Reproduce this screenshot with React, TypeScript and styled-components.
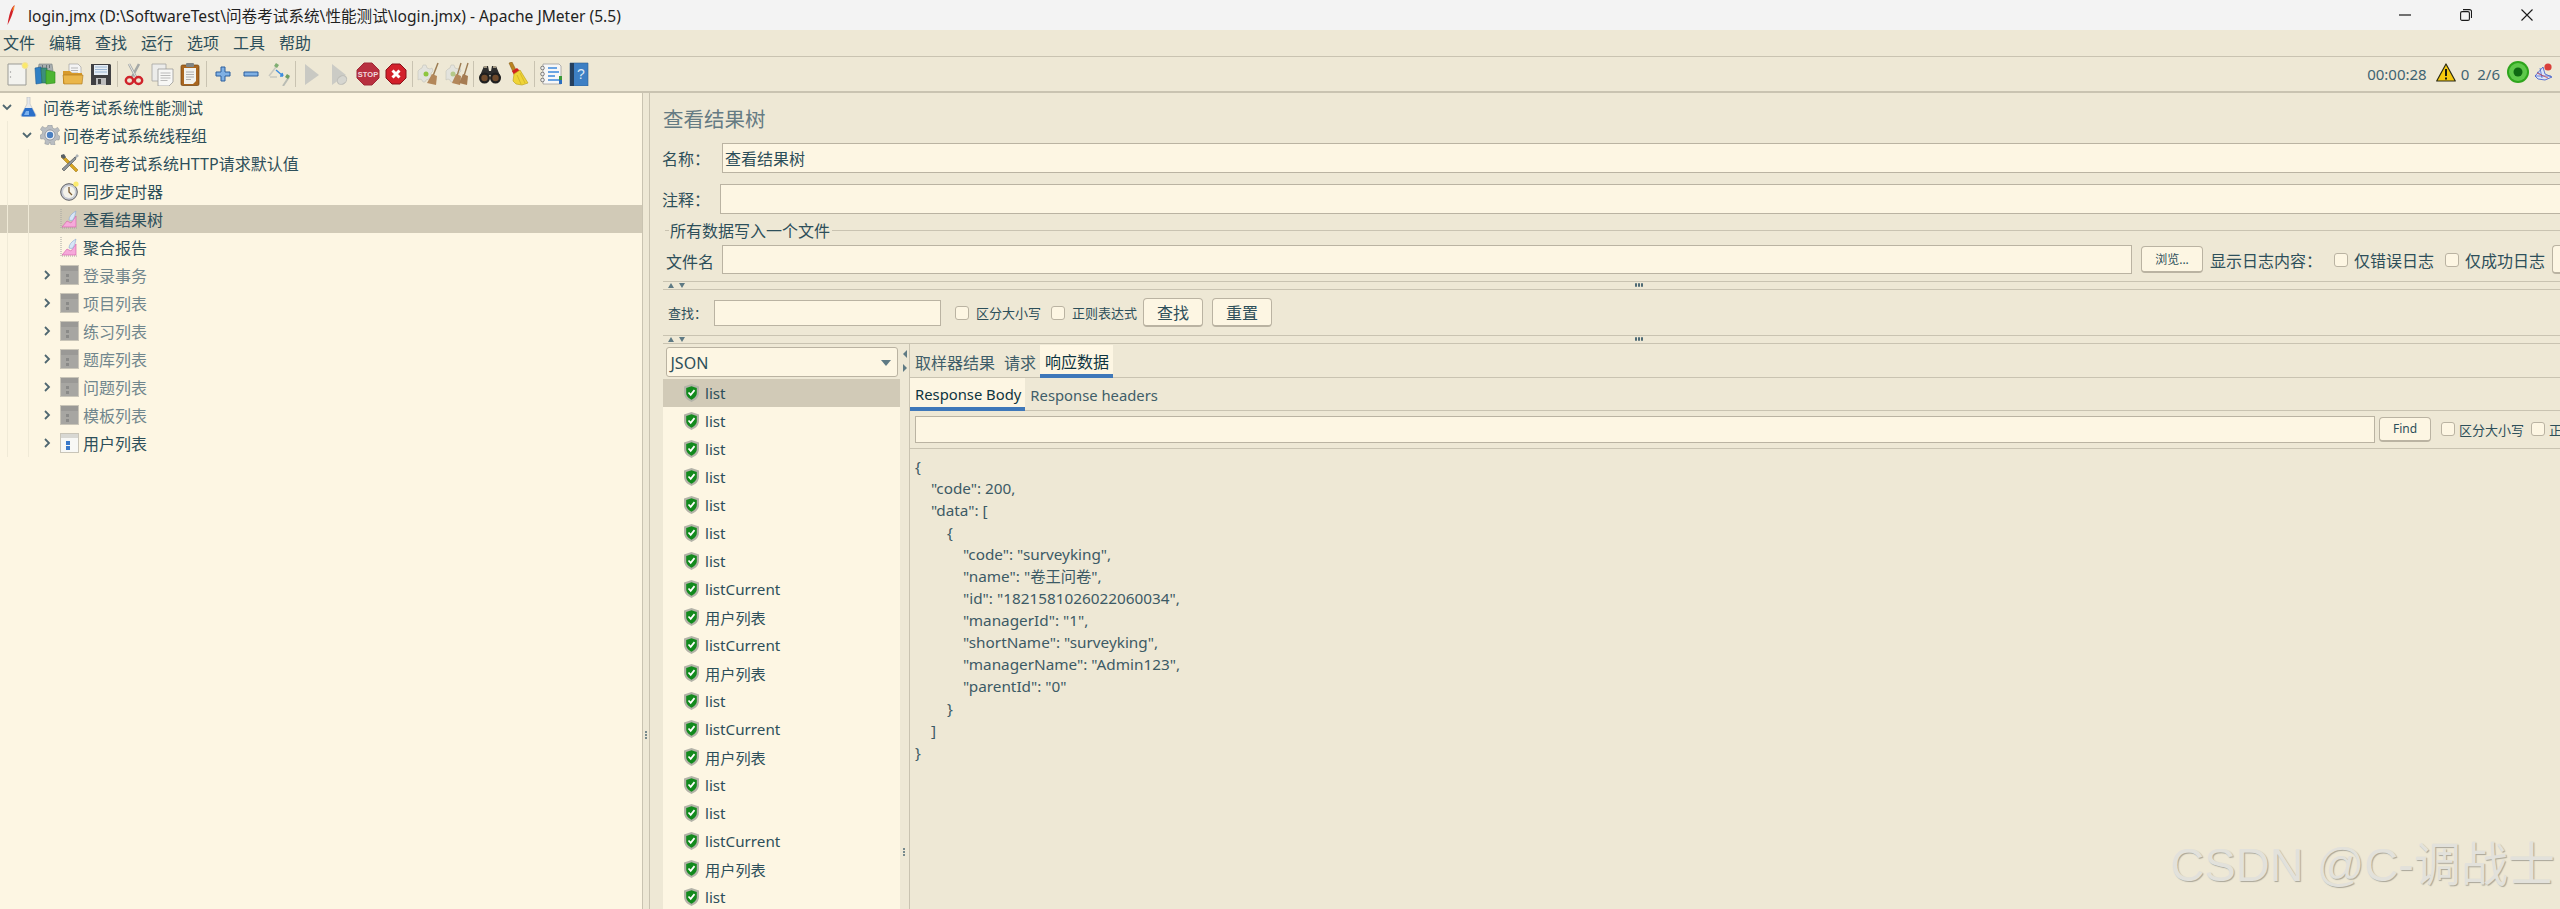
import React from 'react';
import styled, { createGlobalStyle, css } from 'styled-components';

const FONT = '"Noto Sans", "Noto Sans CJK SC", sans-serif';
const PANEL = '#eee8d5';
const PAPER = '#fdf6e3';
const LINE = '#c9c3b1';
const FIELD_LINE = '#bab3a2';
const INK = '#2d4f5a';
const SELECTED = '#d1cab7';
const BLUE = '#3f78b9';

const GlobalStyle = createGlobalStyle`
  html, body {
    margin: 0;
    padding: 0;
    overflow: hidden;
    background: ${PANEL};
  }
  body {
    font-family: ${FONT};
    font-size: 16px;
    color: ${INK};
  }
`;

/* toolbar icons, all on a 24 box */
const IconNew = () => (
  <svg width="24" height="24" viewBox="0 0 24 24">
    <path d="M3 2h18v21H3z" fill="#f3f3ef" stroke="#9b9b95" />
    <circle cx="5.500" cy="10" r=".7" fill="#999" />
    <circle cx="5.500" cy="15" r=".7" fill="#999" />
    <circle cx="20" cy="3.500" r="3" fill="#fbe96a" stroke="#f3e2a0" />
  </svg>
);
const IconTemplates = () => (
  <svg width="24" height="24" viewBox="0 0 24 24">
    <path d="M6 2l13 0 1 7H5z" fill="#a8aeb0" stroke="#78807f" strokeWidth=".6" />
    <path d="M2 6l6-1 1 16-6 1z" fill="#2f7fc4" stroke="#1c5a93" strokeWidth=".6" />
    <path d="M8 6h6v15H9z" fill="#3d8f7b" stroke="#276a58" strokeWidth=".6" />
    <path d="M13 8l9 2v11l-9 1z" fill="#4db531" stroke="#2c8a19" strokeWidth=".6" />
    <path d="M9 3h1v3H9zM13 3h1v3h-1zM16 3h1v3h-1z" fill="#6b7476" />
  </svg>
);
const IconOpen = () => (
  <svg width="24" height="24" viewBox="0 0 24 24">
    <path d="M8 2h9l3 3v9H8z" fill="#f4f4f4" stroke="#a4a4a4" strokeWidth=".7" />
    <path d="M10 6h7M10 8.500h7M10 11h7" stroke="#b5b5b5" />
    <path d="M2 9h7l2 2h10v10a1 1 0 0 1-1 1H3a1 1 0 0 1-1-1z" fill="#d79a2b" />
    <path d="M2 13h20l-1 9H3z" fill="#eab64a" stroke="#a9741a" strokeWidth=".6" />
  </svg>
);
const IconSave = () => (
  <svg width="24" height="24" viewBox="0 0 24 24">
    <path d="M2 2h19l1 1v20H2z" fill="#3f3f42" />
    <path d="M5 3h14v10H5z" fill="#e6edf4" />
    <path d="M6 5h12M6 7.500h12M6 10h12" stroke="#9cb7d4" />
    <path d="M7 16h10v7H7z" fill="#bdbdbd" />
    <path d="M9 17h3v5H9z" fill="#444" />
  </svg>
);
const IconCut = () => (
  <svg width="24" height="24" viewBox="0 0 24 24">
    <path d="M7 2l7 13M17 2l-7 13" stroke="#a4a8a6" strokeWidth="2.600" fill="none" />
    <path d="M7 2l7 13" stroke="#e4e5e3" strokeWidth="1" />
    <ellipse cx="7.500" cy="18.500" rx="3.700" ry="3.500" fill="none" stroke="#d0232b" strokeWidth="2.400" />
    <ellipse cx="16.500" cy="18.500" rx="3.700" ry="3.500" fill="none" stroke="#d0232b" strokeWidth="2.400" />
  </svg>
);
const IconCopy = () => (
  <svg width="24" height="24" viewBox="0 0 24 24">
    <path d="M2 2h14v17H2z" fill="#ececea" stroke="#a5a5a1" strokeWidth=".8" />
    <path d="M8 7h15v13l-4 4H8z" fill="#f7f7f5" stroke="#9b9b97" strokeWidth=".8" />
    <path d="M10.500 11h10M10.500 13.500h10M10.500 16h10M10.500 18.500h7" stroke="#a9a9a9" strokeWidth=".8" />
  </svg>
);
const IconPaste = () => (
  <svg width="24" height="24" viewBox="0 0 24 24">
    <rect x="3" y="3" width="18" height="20.500" rx="1.500" fill="#a9661f" stroke="#6d4010" strokeWidth=".7" />
    <path d="M6 6h12v13l-3 3H6z" fill="#f2f2ee" />
    <path d="M8 10h8M8 12.500h8M8 15h8M8 17.500h5" stroke="#9f9f9f" strokeWidth=".8" />
    <rect x="8" y="1" width="8" height="4" rx="1" fill="#7f8484" />
  </svg>
);
const IconPlus = () => (
  <svg width="24" height="24" viewBox="0 0 24 24">
    <path d="M10 5h4v5h5v4h-5v5h-4v-5H5v-4h5z" fill="#7fb0e4" stroke="#2c5f9d" strokeWidth="1" />
  </svg>
);
const IconMinus = () => (
  <svg width="24" height="24" viewBox="0 0 24 24">
    <path d="M5 10h14v4H5z" fill="#7fb0e4" stroke="#2c5f9d" strokeWidth="1" />
  </svg>
);
const IconToggle = () => (
  <svg width="24" height="24" viewBox="0 0 24 24">
    <path d="M2 14l7-9M3 15l7 0" stroke="#c8c8c0" strokeWidth="1.500" />
    <path d="M16 24l6-9" stroke="#b9bcb4" strokeWidth="2" />
    <path d="M9 1l3 2-2 3-3-2z" fill="#7fae72" />
    <path d="M20 12l3 2-2 3-3-2z" fill="#6f9f62" />
    <path d="M9 8l7 6m0 0l-1-3m1 3l-3 0" stroke="#3c8ce0" strokeWidth="1.500" fill="none" />
  </svg>
);
const IconPlay = () => (
  <svg width="24" height="24" viewBox="0 0 24 24">
    <path d="M5 2l14 11L5 23z" fill="#c9c9c3" />
  </svg>
);
const IconPlayNoPause = () => (
  <svg width="24" height="24" viewBox="0 0 24 24">
    <path d="M4 2l14 11L4 23z" fill="#cbcbc5" />
    <ellipse cx="14" cy="18" rx="5" ry="4" fill="#d6d6d0" stroke="#bdbdb7" transform="rotate(-35 14 18)" />
  </svg>
);
const StopLabel = styled.text`
  font-family: "Liberation Sans", sans-serif;
  font-size: 7.500px;
  font-weight: 700;
  fill: #f1d9dd;
`;
const IconStop = () => (
  <svg width="24" height="24" viewBox="0 0 24 24">
    <path d="M8 1h8l7 7v8l-7 7H8l-7-7V8z" fill="#b8303f" stroke="#a02a38" />
    <StopLabel x="12" y="15" textAnchor="middle">STOP</StopLabel>
  </svg>
);
const IconShutdown = () => (
  <svg width="24" height="24" viewBox="0 0 24 24">
    <path d="M8 2h8l6 6v8l-6 6H8l-6-6V8z" fill="#d3202a" stroke="#87131a" />
    <path d="M8.500 8.500l7 7M15.500 8.500l-7 7" stroke="#fff" strokeWidth="3" />
  </svg>
);
const GearBlob = () => (
  <path
    d="M3 7l2-1 1-3h3l1 3 3 1 2-1 1 3-2 2v3l2 2-2 2-2-1-3 1-1 2H6l-1-2-2-1-2 1v-9z"
    fill="#e3e3dd"
    stroke="#c2c2ba"
    strokeWidth=".6"
  />
);
const IconClear = () => (
  <svg width="24" height="24" viewBox="0 0 24 24">
    <GearBlob />
    <circle cx="9" cy="12" r="2.500" fill="#8ec63f" />
    <path d="M21 1l-5 13" stroke="#9b7b52" strokeWidth="1.500" />
    <path d="M15 12l5 2-1 9-9-2z" fill="#b3875a" />
  </svg>
);
const IconClearAll = () => (
  <svg width="24" height="24" viewBox="0 0 24 24">
    <GearBlob />
    <circle cx="8" cy="12" r="2.500" fill="#b4c98a" />
    <path d="M16 1l-4 13M23 1l-4 13" stroke="#9b7b52" strokeWidth="1.400" />
    <path d="M11 12l5 2-1 9-8-2z" fill="#b3875a" />
    <path d="M18 12l5 2-1 9-8-2z" fill="#a67c52" />
  </svg>
);
const IconSearch = () => (
  <svg width="24" height="24" viewBox="0 0 24 24">
    <path d="M6 4h4l1 5h2l1-5h4l5 12H14v-3h-4v3H1z" fill="#2c2c2c" />
    <circle cx="6.500" cy="16" r="5.500" fill="#1f1f1f" />
    <circle cx="17.500" cy="16" r="5.500" fill="#1f1f1f" />
    <circle cx="6.500" cy="16" r="3.200" fill="#6e4a2c" />
    <circle cx="17.500" cy="16" r="3.200" fill="#6e4a2c" />
    <path d="M6 5h3M15 5h3" stroke="#c4b79b" strokeWidth="1.400" />
  </svg>
);
const IconBroom = () => (
  <svg width="24" height="24" viewBox="0 0 24 24">
    <path d="M3 1l3-1 4 8-3 2z" fill="#bb8421" stroke="#7d5410" strokeWidth=".5" />
    <path d="M6 9l5-3 3 3-6 4z" fill="#d21f1f" />
    <path d="M8 12l6-4 8 13-6 2-6-1-3-3z" fill="#f0d437" stroke="#b59c1a" strokeWidth=".6" />
    <path d="M11 13l4 9M14 11l5 10" stroke="#c9ae22" strokeWidth=".7" />
  </svg>
);
const IconLog = () => (
  <svg width="24" height="24" viewBox="0 0 24 24">
    <path d="M4 2h16l2 2v18H4z" fill="#f7f7f7" stroke="#9f9f9f" strokeWidth=".8" />
    <path d="M9 6h9M9 10h11M9 14h7M9 18h11" stroke="#3d89dd" strokeWidth="1.300" />
    <circle cx="3.500" cy="6" r="1.800" fill="#eee" stroke="#555" strokeWidth=".7" />
    <circle cx="3.500" cy="12" r="1.800" fill="#eee" stroke="#555" strokeWidth=".7" />
    <circle cx="3.500" cy="18" r="1.800" fill="#eee" stroke="#555" strokeWidth=".7" />
    <rect x="20" y="14" width="3" height="4" fill="#3a9a3a" />
    <rect x="20" y="18" width="3" height="4" fill="#2c6fbf" />
  </svg>
);
const HelpMark = styled.text`
  font-family: "Liberation Sans", sans-serif;
  font-size: 14px;
  fill: #dbe9f7;
`;
const IconHelp = () => (
  <svg width="24" height="24" viewBox="0 0 24 24">
    <path d="M3 1h18v23H3z" fill="#3d7fc4" stroke="#2f5f92" strokeWidth=".6" />
    <path d="M3 1h4v23H3z" fill="#25405f" />
    <HelpMark x="14" y="17" textAnchor="middle">?</HelpMark>
  </svg>
);

/* tree icons */
const IconFlask = () => (
  <svg width="18" height="20" viewBox="0 0 18 20">
    <path d="M7 0h3v7l6 11q0 2-2 2H3q-2 0-2-2l6-11z" fill="#e6e8ea" stroke="#b5b9bd" strokeWidth=".6" />
    <path d="M5 11h7l3.500 7q0 1.500-1.500 1.500H3q-1.500 0-1.500-1.500z" fill="#2a6fc9" />
    <path d="M6 14h3v4H4z" fill="#7db2ee" />
  </svg>
);
const IconGear = () => (
  <svg width="20" height="20" viewBox="0 0 20 20">
    <path
      d="M8 0h4l.6 3 2.400 1 2.600-1.600 2 3-2.200 2 .4 2.600 2.200 1.400-1 3.600-2.800-.2-1.800 2 .6 3-3.600 1L10 17l-1.600 2.800-3.600-1 .6-3-1.800-2-2.800.2-1-3.600L2.200 9l.4-2.600-2.200-2 2-3L5 3l2.400-1z"
      fill="#b9bdc1"
      stroke="#8b9094"
      strokeWidth=".5"
    />
    <circle cx="10" cy="10" r="5" fill="#f2f3f5" stroke="#70767c" strokeWidth=".6" />
    <circle cx="10" cy="10" r="3.200" fill="#4a7fc0" />
  </svg>
);
const IconTools = () => (
  <svg width="20" height="20" viewBox="0 0 20 20">
    <path d="M3 2l15 15-2 2L1 4z" fill="#d9a520" stroke="#8d6b10" strokeWidth=".5" />
    <path d="M17 1l2 2-4 3-1-1z" fill="#aab0b5" />
    <path d="M15 4L2 16l2 2L16 6z" fill="#8f959a" stroke="#44494d" strokeWidth=".6" />
    <path d="M1 2l3-1 2 3-2 2-3-2z" fill="#596066" />
  </svg>
);
const IconTimer = () => (
  <svg width="20" height="20" viewBox="0 0 20 20">
    <circle cx="9" cy="11" r="8.300" fill="#c8cbd3" stroke="#5e6066" strokeWidth="1" />
    <circle cx="9" cy="11" r="6" fill="#f5f3ea" />
    <path d="M9 6v5l3 3" stroke="#7a5a30" strokeWidth="1.300" fill="none" />
    <circle cx="16" cy="3" r="2.600" fill="#fbea6c" />
  </svg>
);
const IconGraph = () => (
  <svg width="18" height="20" viewBox="0 0 18 20">
    <path d="M1 0v19h16" stroke="#a6a6a0" strokeDasharray="1 1" fill="none" />
    <path d="M2 18l5-6 4 2 5-7v11z" fill="#f6a9da" stroke="#d45aa8" strokeWidth=".6" />
    <path d="M9 11q0-5 7-9-1 6-3 9-2 1-4 0z" fill="#d8e6f8" stroke="#8aa8d0" strokeWidth=".6" />
  </svg>
);
const IconController = ({ $off }: { $off: boolean }) => (
  <svg width="19" height="20" viewBox="0 0 19 20">
    {$off ? (
      <>
        <rect x=".5" y=".5" width="18" height="19" fill="#a7a6a2" stroke="#c9c5b8" />
        <rect x="1" y="1" width="17" height="5" fill="#9a9996" />
        <path d="M6 9h3v3H6zM6 14h3v3H6z" fill="#8a8a88" />
      </>
    ) : (
      <>
        <rect x=".5" y=".5" width="18" height="19" fill="#f8f8f5" stroke="#c9c5b8" />
        <rect x="1" y="1" width="17" height="4" fill="#d8d8d3" />
        <path d="M6 8h4v4H6zM6 13h4v4H6z" fill="#3a79c9" />
      </>
    )}
  </svg>
);
const IconShield = () => (
  <svg width="15" height="18" viewBox="0 0 15 18">
    <path d="M7.500 0L15 2.500V9c0 4.500-4 7.500-7.500 9C4 16.500 0 13.500 0 9V2.500z" fill="#b3b3a8" />
    <path d="M7.500 2.300L12.800 4v5c0 3.200-2.800 5.500-5.300 6.700C5 14.500 2.200 12.200 2.200 9V4z" fill="#128a1d" />
    <path d="M4.500 8.500l2.200 2.400 3.800-4.800" stroke="#fff" strokeWidth="1.700" fill="none" />
  </svg>
);

const Window = styled.div`
  position: relative;
  display: flex;
  flex-direction: column;
  width: 2560px;
  height: 909px;
  overflow: hidden;
  background: ${PANEL};
`;

const TitleBar = styled.div`
  display: flex;
  align-items: center;
  height: 30px;
  flex: none;
  padding-left: 7px;
  background: #f3f3f3;
`;
const TitleText = styled.span`
  margin-left: 13px;
  font-size: 15.600px;
  color: #1f1f1f;
  white-space: nowrap;
`;
const WindowButtons = styled.div`
  display: flex;
  align-items: center;
  margin-left: auto;
  padding-right: 27px;
  gap: 49px;
`;

const MenuBar = styled.div`
  display: flex;
  align-items: center;
  height: 27px;
  flex: none;
  box-sizing: border-box;
  padding-left: 3px;
  gap: 14px;
  border-bottom: 1px solid ${LINE};
`;
const MenuItem = styled.span`
  font-size: 16px;
  line-height: 26px;
`;

const ToolBar = styled.div`
  display: flex;
  align-items: center;
  height: 36px;
  flex: none;
  box-sizing: border-box;
  padding-left: 3px;
  border-bottom: 2px solid ${LINE};
`;
const ToolSlot = styled.span`
  display: flex;
  align-items: center;
  justify-content: center;
  width: 28px;
  height: 24px;
`;
const ToolSeparator = styled.span`
  width: 1px;
  height: 26px;
  margin: 0 2px;
  background: ${LINE};
`;
const StatusGroup = styled.div`
  display: flex;
  align-items: center;
  margin-left: auto;
  padding-right: 7px;
  font-size: 15px;
  color: #3f6472;
`;
const StatusText = styled.span<{ $left: number }>`
  margin-left: ${({ $left }) => $left}px;
`;

const Body = styled.div`
  display: flex;
  flex: 1;
  min-height: 0;
`;

const TreePane = styled.div`
  flex: none;
  width: 642px;
  background: ${PAPER};
`;
const guideAt = (x: number) =>
  `linear-gradient(#f0ead7, #f0ead7) ${x}px 0 / 1px 100% no-repeat`;
const TreeRow = styled.div<{ $depth: number; $selected?: boolean }>`
  display: flex;
  align-items: center;
  height: 28px;
  padding-left: ${({ $depth }) => $depth * 20}px;
  background: ${({ $depth }) =>
    [$depth >= 1 ? guideAt(7) : '', $depth >= 2 ? guideAt(28) : ''].filter(Boolean).join(', ') || 'none'};
  ${({ $selected }) =>
    $selected &&
    css`
      background-color: ${SELECTED};
    `}
`;
const TreeArrow = styled.span`
  display: flex;
  align-items: center;
  justify-content: center;
  width: 14px;
`;
const TreeIcon = styled.span`
  display: flex;
  align-items: center;
  width: 23px;
  margin-left: 6px;
`;
const TreeLabel = styled.span<{ $off?: boolean }>`
  font-size: 16px;
  color: ${({ $off }) => ($off ? '#71868d' : INK)};
`;

const Splitter = styled.div`
  flex: none;
  position: relative;
  width: 6px;
  border-left: 1px solid ${LINE};
  border-right: 1px solid ${LINE};
`;
const GripDots = styled.span<{ $row?: boolean }>`
  display: flex;
  flex-direction: ${({ $row }) => ($row ? 'row' : 'column')};
  gap: 1px;
  i {
    display: block;
    width: 2px;
    height: ${({ $row }) => ($row ? 4 : 2)}px;
    border-radius: ${({ $row }) => ($row ? '1px' : '50%')};
    background: #4f6b75;
  }
`;
const SplitGrip = styled.span`
  position: absolute;
  left: 2px;
  top: 638px;
`;

const RightPane = styled.div`
  flex: none;
  width: 1898px;
  padding-left: 13px;
`;
const PaneTitle = styled.div`
  display: flex;
  align-items: center;
  height: 50px;
  font-size: 20.500px;
  color: #657b83;
`;
const FieldRow = styled.div<{ $bottom?: number }>`
  display: flex;
  align-items: center;
  height: 30px;
  margin-bottom: ${({ $bottom }) => $bottom ?? 0}px;
`;
const FieldLabel = styled.label<{ $width: number }>`
  flex: none;
  width: ${({ $width }) => $width + 1}px;
  margin-left: -1px;
  font-size: 16px;
  white-space: nowrap;
`;
const TextInput = styled.input<{ $width?: number; $height?: number; $left?: number }>`
  flex: ${({ $width }) => ($width ? 'none' : 1)};
  min-width: 0;
  width: ${({ $width }) => ($width ? `${$width}px` : 'auto')};
  height: ${({ $height }) => $height ?? 30}px;
  margin-left: ${({ $left }) => $left ?? 0}px;
  box-sizing: border-box;
  padding: 0 2px;
  border: 1px solid ${FIELD_LINE};
  border-width: 1px ${({ $width }) => ($width ? 1 : 0)}px 1.500px 1px;
  border-radius: 0;
  outline: none;
  background: ${PAPER};
  font-family: ${FONT};
  font-size: 16px;
  color: ${INK};
`;

const FieldSet = styled.div`
  margin-top: 6px;
`;
const LegendRow = styled.div`
  display: flex;
  align-items: center;
  height: 20px;
  padding-left: 2px;
  margin-bottom: 5px;
  &::before,
  &::after {
    content: '';
    height: 1px;
    background: ${LINE};
  }
  &::before {
    width: 4px;
  }
  &::after {
    flex: 1;
  }
`;
const Legend = styled.span`
  padding: 0 2px 0 1px;
  font-size: 16px;
`;
const FileRow = styled.div`
  display: flex;
  align-items: center;
  height: 29px;
  margin-bottom: 7px;
  padding-left: 3px;
`;
const PlainLabel = styled.span<{ $left?: number; $width?: number; $size?: number; $drop?: number }>`
  flex: none;
  margin-left: ${({ $left }) => $left ?? 0}px;
  padding-top: ${({ $drop }) => $drop ?? 0}px;
  width: ${({ $width }) => ($width ? `${$width}px` : 'auto')};
  font-size: ${({ $size }) => $size ?? 16}px;
  white-space: nowrap;
`;
const CheckBox = styled.input.attrs({ type: 'checkbox' })<{ $left: number }>`
  flex: none;
  appearance: none;
  width: 14px;
  height: 14px;
  margin: 0 0 0 ${({ $left }) => $left}px;
  box-sizing: border-box;
  border: 1px solid ${FIELD_LINE};
  border-radius: 3px;
  background: ${PAPER};
`;
const PushButton = styled.button<{ $left: number; $width: number; $height: number; $size?: number }>`
  flex: none;
  width: ${({ $width }) => $width}px;
  height: ${({ $height }) => $height}px;
  margin-left: ${({ $left }) => $left}px;
  padding: 0;
  border: 1px solid ${FIELD_LINE};
  border-bottom-width: 2px;
  border-radius: 4px;
  background: ${PAPER};
  font-family: ${FONT};
  font-size: ${({ $size }) => $size ?? 16}px;
  color: ${INK};
  white-space: nowrap;
`;
const ClippedButton = styled.span`
  flex: none;
  width: 9px;
  height: 29px;
  margin-left: 7px;
  box-sizing: border-box;
  border: 1px solid ${FIELD_LINE};
  border-right: 0;
  border-bottom-width: 2px;
  border-radius: 4px 0 0 4px;
  background: ${PAPER};
`;

const SplitBar = styled.div`
  position: relative;
  display: flex;
  align-items: center;
  gap: 5px;
  height: 9px;
  box-sizing: border-box;
  padding-left: 5px;
  border-top: 1px solid ${LINE};
  border-bottom: 1px solid ${LINE};
`;
const BarGrip = styled.span`
  position: absolute;
  left: 972px;
  top: 1px;
`;
const Triangle = styled.span<{ $dir: 'up' | 'down' | 'left' | 'right'; $large?: boolean }>`
  display: block;
  width: 0;
  height: 0;
  ${({ $dir, $large }) => {
    const half = $large ? 5 : 3.5;
    const long = $large ? 6 : 5;
    if ($dir === 'up') {
      return `border-left: ${half}px solid transparent; border-right: ${half}px solid transparent; border-bottom: ${long}px solid #5f7a84;`;
    }
    if ($dir === 'down') {
      return `border-left: ${half}px solid transparent; border-right: ${half}px solid transparent; border-top: ${long}px solid #5f7a84;`;
    }
    if ($dir === 'left') {
      return 'border-top: 4px solid transparent; border-bottom: 4px solid transparent; border-right: 4px solid #5f7a84;';
    }
    return 'border-top: 4px solid transparent; border-bottom: 4px solid transparent; border-left: 4px solid #5f7a84;';
  }}
`;

const SearchRow = styled.div`
  display: flex;
  align-items: center;
  height: 45px;
  padding-left: 5px;
`;

const Lower = styled.div`
  display: flex;
  height: 565px;
`;
const ListColumn = styled.div`
  flex: none;
  width: 237px;
  background: ${PAPER};
  box-shadow: inset 0 35px 0 ${PANEL};
`;
const Combo = styled.div`
  display: flex;
  align-items: center;
  justify-content: space-between;
  box-sizing: border-box;
  width: 232px;
  height: 30px;
  margin: 3px 0 2px 2.500px;
  padding: 1px 6px 0 4px;
  border: 1px solid ${FIELD_LINE};
  border-bottom-width: 1.500px;
  border-radius: 3px;
  background: ${PAPER};
  font-size: 16px;
`;
const ResultRow = styled.div<{ $selected?: boolean }>`
  display: flex;
  align-items: center;
  height: 28px;
  padding-left: 21px;
  gap: 6px;
  background: ${({ $selected }) => ($selected ? SELECTED : 'transparent')};
  font-size: 15.200px;
`;
const ColumnSplit = styled.div`
  flex: none;
  position: relative;
  display: flex;
  flex-direction: column;
  align-items: center;
  gap: 6px;
  width: 9px;
  padding-top: 6px;
  border-right: 1px solid ${LINE};
`;
const ColumnGrip = styled.span`
  position: absolute;
  left: 3px;
  top: 504px;
`;
const ResultPane = styled.div`
  flex: 1;
  min-width: 0;
`;
const TabStrip = styled.div<{ $height: number; $top?: number }>`
  display: flex;
  box-sizing: border-box;
  height: ${({ $height }) => $height}px;
  margin-top: ${({ $top }) => $top ?? 0}px;
  border-bottom: 1px solid ${LINE};
`;
const Tab = styled.div<{ $active?: boolean; $size?: number }>`
  display: flex;
  align-items: center;
  box-sizing: border-box;
  padding: 2px 4px 0 5px;
  font-size: ${({ $size }) => $size ?? 16}px;
  color: ${({ $active }) => ($active ? '#0d3440' : '#3f5e69')};
  ${({ $active }) =>
    $active &&
    css`
      margin-bottom: -1px;
      background: ${PAPER};
      border-bottom: 4px solid ${BLUE};
    `}
`;
const FindRow = styled.div`
  display: flex;
  align-items: center;
  box-sizing: border-box;
  height: 38px;
  padding: 0 0 1px 5px;
  border-bottom: 1px solid ${LINE};
`;
const JsonView = styled.div`
  padding: 6px 0 0 5px;
`;
const JsonLine = styled.div<{ $indent: number }>`
  height: 22px;
  line-height: 22px;
  padding-left: ${({ $indent }) => $indent * 16}px;
  font-size: 15.300px;
  color: #3c5a65;
  white-space: pre;
`;

const Watermark = styled.div`
  position: absolute;
  right: 5px;
  bottom: 18px;
  font-family: "Liberation Sans", "Noto Sans CJK SC", sans-serif;
  font-size: 47px;
  line-height: 52px;
  color: #e2e1db;
  text-shadow: 1px 1px 1px #a9a699;
  white-space: nowrap;
`;

const Grip = ({ row }: { row?: boolean }) => (
  <GripDots $row={row}>
    <i />
    <i />
    <i />
  </GripDots>
);

const Chevron = ({ open }: { open: boolean }) => (
  <svg width="10" height="10" viewBox="0 0 10 10">
    <path d={open ? 'M1 3l4 4 4-4' : 'M3 1l4 4-4 4'} fill="none" stroke="#4f6770" strokeWidth="1.800" />
  </svg>
);

const tools = [
  [IconNew, IconTemplates, IconOpen, IconSave],
  [IconCut, IconCopy, IconPaste],
  [IconPlus, IconMinus, IconToggle],
  [IconPlay, IconPlayNoPause, IconStop, IconShutdown],
  [IconClear, IconClearAll],
  [IconSearch, IconBroom],
  [IconLog, IconHelp],
];

const menus = ['文件', '编辑', '查找', '运行', '选项', '工具', '帮助'];
const disabledNodes = ['登录事务', '项目列表', '练习列表', '题库列表', '问题列表', '模板列表'];
const results = [
  'list', 'list', 'list', 'list', 'list', 'list', 'list', 'listCurrent', '用户列表', 'listCurrent',
  '用户列表', 'list', 'listCurrent', '用户列表', 'list', 'list', 'listCurrent', '用户列表', 'list',
];
const json: [number, string][] = [
  [0, '{'],
  [1, '"code": 200,'],
  [1, '"data": ['],
  [2, '{'],
  [3, '"code": "surveyking",'],
  [3, '"name": "卷王问卷",'],
  [3, '"id": "1821581026022060034",'],
  [3, '"managerId": "1",'],
  [3, '"shortName": "surveyking",'],
  [3, '"managerName": "Admin123",'],
  [3, '"parentId": "0"'],
  [2, '}'],
  [1, ']'],
  [0, '}'],
];

export default function App() {
  return (
    <Window>
      <GlobalStyle />
      <TitleBar>
        <svg width="8" height="20" viewBox="0 0 8 20">
          <path d="M7.500 0C4 3 2 9 .5 20 3 15 6 9 7.500 0z" fill="#d22128" />
          <path d="M7.500 0C6 2 5.500 4 5 6l2-1z" fill="#f58f2a" />
        </svg>
        <TitleText>login.jmx (D:\SoftwareTest\问卷考试系统\性能测试\login.jmx) - Apache JMeter (5.5)</TitleText>
        <WindowButtons>
          <svg width="12" height="12" viewBox="0 0 12 12">
            <path d="M0 6h12" stroke="#1a1a1a" strokeWidth="1.200" />
          </svg>
          <svg width="12" height="12" viewBox="0 0 12 12">
            <rect x=".6" y="2.600" width="8.800" height="8.800" rx="1.500" fill="none" stroke="#1a1a1a" strokeWidth="1.100" />
            <path d="M3 .6h6.500a2 2 0 0 1 2 2V9" fill="none" stroke="#1a1a1a" strokeWidth="1.100" />
          </svg>
          <svg width="12" height="12" viewBox="0 0 12 12">
            <path d="M.5.5l11 11M11.500.5l-11 11" stroke="#1a1a1a" strokeWidth="1.100" />
          </svg>
        </WindowButtons>
      </TitleBar>

      <MenuBar>
        {menus.map((m) => (
          <MenuItem key={m}>{m}</MenuItem>
        ))}
      </MenuBar>

      <ToolBar>
        {tools.map((group, i) => (
          <React.Fragment key={i}>
            {i > 0 && <ToolSeparator />}
            {group.map((Icon, j) => (
              <ToolSlot key={j}>
                <Icon />
              </ToolSlot>
            ))}
          </React.Fragment>
        ))}
        <StatusGroup>
          <span>00:00:28</span>
          <StatusText $left={9}>
            <svg width="20" height="19" viewBox="0 0 20 19">
              <path d="M10 1l9.300 17H.7z" fill="#f6c90e" stroke="#2b2b14" strokeWidth="1.200" strokeLinejoin="round" />
              <path d="M10 6v7M10 14.500v2" stroke="#1c1c10" strokeWidth="2" />
            </svg>
          </StatusText>
          <StatusText $left={5}>0</StatusText>
          <StatusText $left={8}>2/6</StatusText>
          <StatusText $left={7}>
            <svg width="22" height="22" viewBox="0 0 22 22">
              <circle cx="11" cy="11" r="11" fill="#2ea51c" />
              <circle cx="11" cy="11" r="9" fill="#5ec84a" />
              <circle cx="11" cy="11" r="4.500" fill="#0f6a12" />
            </svg>
          </StatusText>
          <StatusText $left={5}>
            <svg width="19" height="19" viewBox="0 0 19 19">
              <path d="M1 13l8-9 2 7 7 3-7 3-7-1z" fill="#dbe3f7" stroke="#3a57c9" strokeWidth=".8" />
              <path d="M3 9l6 4M6 5l2 10M1 13l16 0" stroke="#3a57c9" strokeWidth=".7" />
              <path d="M3 10l11 5" stroke="#d64a4a" strokeWidth=".8" />
              <circle cx="14" cy="4" r="3.600" fill="#d9403a" />
            </svg>
          </StatusText>
        </StatusGroup>
      </ToolBar>

      <Body>
        <TreePane>
          <TreeRow $depth={0}>
            <TreeArrow>
              <Chevron open />
            </TreeArrow>
            <TreeIcon>
              <IconFlask />
            </TreeIcon>
            <TreeLabel>问卷考试系统性能测试</TreeLabel>
          </TreeRow>
          <TreeRow $depth={1}>
            <TreeArrow>
              <Chevron open />
            </TreeArrow>
            <TreeIcon>
              <IconGear />
            </TreeIcon>
            <TreeLabel>问卷考试系统线程组</TreeLabel>
          </TreeRow>
          <TreeRow $depth={2}>
            <TreeArrow />
            <TreeIcon>
              <IconTools />
            </TreeIcon>
            <TreeLabel>问卷考试系统HTTP请求默认值</TreeLabel>
          </TreeRow>
          <TreeRow $depth={2}>
            <TreeArrow />
            <TreeIcon>
              <IconTimer />
            </TreeIcon>
            <TreeLabel>同步定时器</TreeLabel>
          </TreeRow>
          <TreeRow $depth={2} $selected>
            <TreeArrow />
            <TreeIcon>
              <IconGraph />
            </TreeIcon>
            <TreeLabel>查看结果树</TreeLabel>
          </TreeRow>
          <TreeRow $depth={2}>
            <TreeArrow />
            <TreeIcon>
              <IconGraph />
            </TreeIcon>
            <TreeLabel>聚合报告</TreeLabel>
          </TreeRow>
          {disabledNodes.map((n) => (
            <TreeRow $depth={2} key={n}>
              <TreeArrow>
                <Chevron open={false} />
              </TreeArrow>
              <TreeIcon>
                <IconController $off />
              </TreeIcon>
              <TreeLabel $off>{n}</TreeLabel>
            </TreeRow>
          ))}
          <TreeRow $depth={2}>
            <TreeArrow>
              <Chevron open={false} />
            </TreeArrow>
            <TreeIcon>
              <IconController $off={false} />
            </TreeIcon>
            <TreeLabel>用户列表</TreeLabel>
          </TreeRow>
        </TreePane>

        <Splitter>
          <SplitGrip>
            <Grip />
          </SplitGrip>
        </Splitter>

        <RightPane>
          <PaneTitle>查看结果树</PaneTitle>
          <FieldRow $bottom={11}>
            <FieldLabel $width={59}>名称：</FieldLabel>
            <TextInput defaultValue="查看结果树" />
          </FieldRow>
          <FieldRow>
            <FieldLabel $width={57}>注释：</FieldLabel>
            <TextInput />
          </FieldRow>
          <FieldSet>
            <LegendRow>
              <Legend>所有数据写入一个文件</Legend>
            </LegendRow>
            <FileRow>
              <PlainLabel $drop={3}>文件名</PlainLabel>
              <TextInput $width={1410} $height={29} $left={8} />
              <PushButton $left={9} $width={62} $height={27} $size={12}>
                浏览...
              </PushButton>
              <PlainLabel $left={7} $width={124}>
                显示日志内容：
              </PlainLabel>
              <CheckBox $left={0} />
              <PlainLabel $left={6}>仅错误日志</PlainLabel>
              <CheckBox $left={11} />
              <PlainLabel $left={6}>仅成功日志</PlainLabel>
              <ClippedButton />
            </FileRow>
          </FieldSet>
          <SplitBar>
            <Triangle $dir="up" />
            <Triangle $dir="down" />
            <BarGrip>
              <Grip row />
            </BarGrip>
          </SplitBar>
          <SearchRow>
            <PlainLabel $width={46} $size={13}>
              查找：
            </PlainLabel>
            <TextInput $width={227} $height={26} />
            <CheckBox $left={14} />
            <PlainLabel $left={7} $size={13}>
              区分大小写
            </PlainLabel>
            <CheckBox $left={10} />
            <PlainLabel $left={7} $size={13}>
              正则表达式
            </PlainLabel>
            <PushButton $left={6} $width={60} $height={29}>
              查找
            </PushButton>
            <PushButton $left={9} $width={60} $height={29}>
              重置
            </PushButton>
          </SearchRow>
          <SplitBar>
            <Triangle $dir="up" />
            <Triangle $dir="down" />
            <BarGrip>
              <Grip row />
            </BarGrip>
          </SplitBar>
          <Lower>
            <ListColumn>
              <Combo>
                JSON
                <Triangle $dir="down" $large />
              </Combo>
              {results.map((r, i) => (
                <ResultRow key={i} $selected={i === 0}>
                  <IconShield />
                  {r}
                </ResultRow>
              ))}
            </ListColumn>
            <ColumnSplit>
              <Triangle $dir="left" />
              <Triangle $dir="right" />
              <ColumnGrip>
                <Grip />
              </ColumnGrip>
            </ColumnSplit>
            <ResultPane>
              <TabStrip $height={33} $top={1}>
                <Tab>取样器结果</Tab>
                <Tab>请求</Tab>
                <Tab $active>响应数据</Tab>
              </TabStrip>
              <TabStrip $height={33}>
                <Tab $active $size={14.8}>
                  Response Body
                </Tab>
                <Tab $size={14.8}>Response headers</Tab>
              </TabStrip>
              <FindRow>
                <TextInput $width={1460} $height={27} />
                <PushButton $left={4} $width={52} $height={25} $size={12}>
                  Find
                </PushButton>
                <CheckBox $left={10} />
                <PlainLabel $left={4} $size={13}>
                  区分大小写
                </PlainLabel>
                <CheckBox $left={7} />
                <PlainLabel $left={4} $size={13}>
                  正则表达式
                </PlainLabel>
              </FindRow>
              <JsonView>
                {json.map(([indent, text], i) => (
                  <JsonLine key={i} $indent={indent}>
                    {text}
                  </JsonLine>
                ))}
              </JsonView>
            </ResultPane>
          </Lower>
        </RightPane>
      </Body>
      <Watermark>CSDN @C-调战士</Watermark>
    </Window>
  );
}
